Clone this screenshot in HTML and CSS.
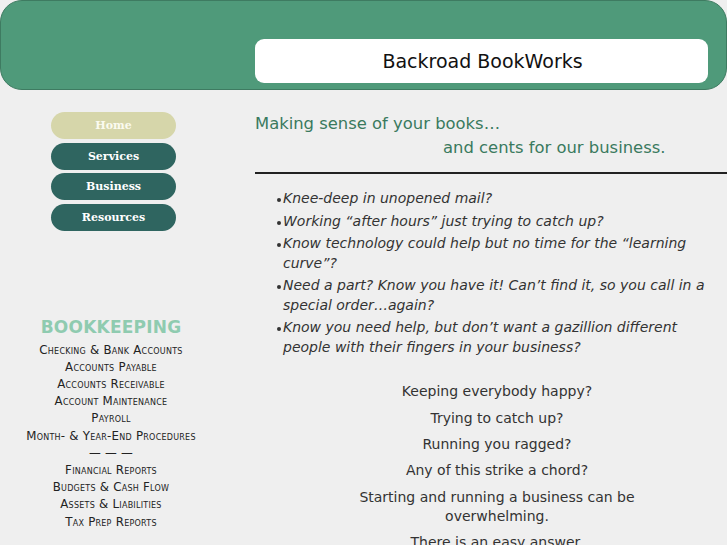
FILE: index.html
```html
<!DOCTYPE html>
<html>
<head>
<meta charset="utf-8">
<link rel="stylesheet" href="styles.css">
</head>
<body>
<header class="banner">
  <div class="title-box">Backroad BookWorks</div>
</header>
<div class="page">
  <aside class="sidebar">
    <nav class="nav">
      <a class="nav-btn active">Home</a>
      <a class="nav-btn">Services</a>
      <a class="nav-btn">Business</a>
      <a class="nav-btn">Resources</a>
    </nav>
    <h2 class="side-head">BOOKKEEPING</h2>
    <ul class="side-list">
      <li>Checking &amp; Bank Accounts</li>
      <li>Accounts Payable</li>
      <li>Accounts Receivable</li>
      <li>Account Maintenance</li>
      <li>Payroll</li>
      <li>Month- &amp; Year-End Procedures</li>
      <li>— — —</li>
      <li>Financial Reports</li>
      <li>Budgets &amp; Cash Flow</li>
      <li>Assets &amp; Liabilities</li>
      <li>Tax Prep Reports</li>
    </ul>
  </aside>
  <main class="content">
    <h1 class="tagline">
      <span class="tag1">Making sense of your books…</span>
      <span class="tag2">and cents for our business.</span>
    </h1>
    <hr class="rule">
    <ul class="questions">
      <li>Knee-deep in unopened mail?</li>
      <li>Working “after hours” just trying to catch up?</li>
      <li>Know technology could help but no time for the “learning curve”?</li>
      <li>Need a part? Know you have it! Can’t find it, so you call in a special order…again?</li>
      <li>Know you need help, but don’t want a gazillion different people with their fingers in your business?</li>
    </ul>
    <div class="centered">
      <p>Keeping everybody happy?</p>
      <p>Trying to catch up?</p>
      <p>Running you ragged?</p>
      <p>Any of this strike a chord?</p>
      <p>Starting and running a business can be overwhelming.</p>
      <p>There is an easy answer.</p>
    </div>
  </main>
</div>
</body>
</html>
```
FILE: styles.css
```css
html, body {
  margin: 0;
  padding: 0;
  background: #efefef;
  font-family: "DejaVu Sans", sans-serif;
  overflow: hidden;
}
.banner {
  box-sizing: border-box;
  width: 727px;
  height: 90px;
  background: #4f9a7a;
  border: 1px solid #3e7b61;
  border-radius: 22px;
  padding: 38px 18px 0 254px;
}
.title-box {
  height: 44px;
  background: #fff;
  border-radius: 9px;
  display: flex;
  align-items: center;
  justify-content: center;
  font-family: "DejaVu Sans", sans-serif;
  font-size: 19px;
  color: #111;
  padding: 0 0 1px 2px;
  box-sizing: border-box;
}
.page {
  display: flex;
}
.sidebar {
  width: 227px;
  flex: none;
  display: flex;
  flex-direction: column;
  align-items: center;
}
.nav {
  margin-top: 22px;
  display: flex;
  flex-direction: column;
  gap: 3.5px;
}
.nav-btn {
  width: 125px;
  height: 27px;
  border-radius: 14px;
  background: #2f6560;
  color: #fff;
  font-family: "DejaVu Serif", serif;
  font-weight: bold;
  font-size: 11px;
  display: flex;
  align-items: center;
  justify-content: center;
}
.nav-btn.active {
  background: #d6d6aa;
  color: #fbfbf0;
}
.side-head {
  margin: 86px 5px 4px 0;
  font-size: 17px;
  font-weight: bold;
  color: #8fcbb0;
  letter-spacing: 0.2px;
}
.side-list {
  list-style: none;
  margin: 1px 5px 0 0;
  padding: 0;
  text-align: center;
  font-variant: small-caps;
  font-size: 11.8px;
  letter-spacing: 0.25px;
  line-height: 17.2px;
  color: #222;
}
.content {
  flex: 1;
  padding-left: 28px;
}
.tagline {
  margin: 22px 0 0;
  font-size: 16.4px;
  font-weight: normal;
  color: #3a7a5e;
  line-height: 24px;
}
.tag1, .tag2 {
  display: block;
}
.tag2 {
  padding-left: 188px;
}
.rule {
  margin: 12px 0 0;
  border: none;
  height: 2px;
  background: #222;
}
.questions {
  list-style: none;
  margin: 15px 0 0;
  padding: 0 20px 0 28px;
  font-style: italic;
  font-size: 14px;
  line-height: 19.3px;
  color: #333;
}
.questions li {
  position: relative;
  margin-bottom: 3.4px;
}
.questions li::before {
  content: "";
  position: absolute;
  left: -6px;
  top: 9px;
  width: 4px;
  height: 4px;
  border-radius: 50%;
  background: #333;
}
.centered {
  margin-top: 25.5px;
  text-align: center;
  padding: 0 80px 0 92px;
  font-size: 14px;
  line-height: 19px;
  color: #333;
}
.centered p {
  margin: 0 0 7.3px;
}
```
